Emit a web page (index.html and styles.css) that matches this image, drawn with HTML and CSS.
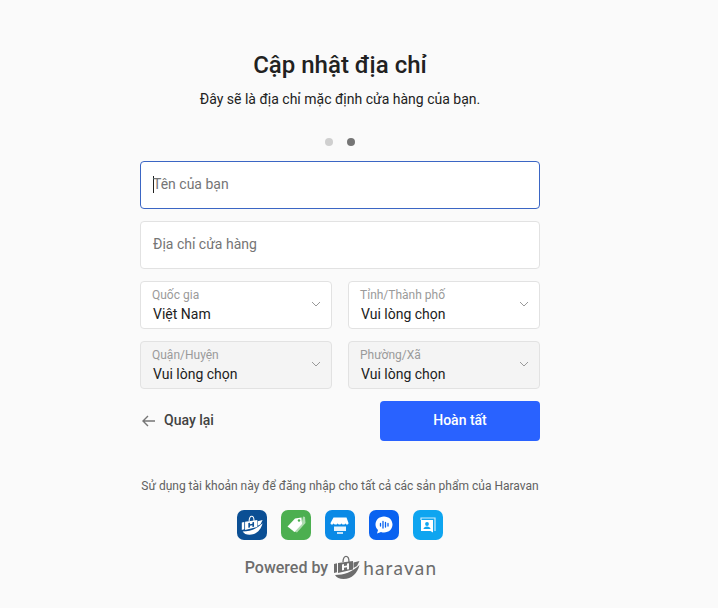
FILE: index.html
```html
<!DOCTYPE html>
<html lang="vi">
<head>
    <meta charset="UTF-8">
    <meta name="viewport" content="width=device-width, initial-scale=1.0">
    <title>Cập nhật địa chỉ</title>
    <link rel="stylesheet" href="styles.css">
</head>
<body>
    <svg class="icon-defs">
        <symbol id="haravan-mark" viewBox="0 0 27 24">
            <path d="M10 7c0-7.500 6-7.500 6 0" fill="none" stroke="currentColor" stroke-width="1.300"/>
            <path d="M1 9l3-.7v9L1 18zM20.500 7.500l6-1.500-2.500 5-3.500 2z" fill="currentColor"/>
            <path fill-rule="evenodd" d="M5 8l15-2v8.500L5 18zM9 9.500v6l2-.4v-2.300l3-.5v2.300l2-.4v-6l-2 .4v2l-3 .5v-2z" fill="currentColor"/>
            <path d="M2 20c9 0 17-3 24.500-10-2 8-7.500 14-16 14-4 0-7-1.500-8.500-4z" fill="currentColor"/>
        </symbol>
    </svg>

    <div class="container">
        <h1>Cập nhật địa chỉ</h1>
        <p class="subtitle">Đây sẽ là địa chỉ mặc định cửa hàng của bạn.</p>

        <div class="steps">
            <span class="dot"></span>
            <span class="dot active"></span>
        </div>

        <form class="address-form">
            <div class="text-field focused">
                <span class="caret"></span>
                <span class="placeholder">Tên của bạn</span>
            </div>
            <div class="text-field">
                <span class="placeholder">Địa chỉ cửa hàng</span>
            </div>

            <div class="select-grid">
                <div class="select-field">
                    <div class="select-label">Quốc gia</div>
                    <div class="select-value">Việt Nam</div>
                    <svg class="chevron" viewBox="0 0 10 6"><path d="M1 1l4 4 4-4"/></svg>
                </div>
                <div class="select-field">
                    <div class="select-label">Tỉnh/Thành phố</div>
                    <div class="select-value">Vui lòng chọn</div>
                    <svg class="chevron" viewBox="0 0 10 6"><path d="M1 1l4 4 4-4"/></svg>
                </div>
                <div class="select-field disabled">
                    <div class="select-label">Quận/Huyện</div>
                    <div class="select-value">Vui lòng chọn</div>
                    <svg class="chevron" viewBox="0 0 10 6"><path d="M1 1l4 4 4-4"/></svg>
                </div>
                <div class="select-field disabled">
                    <div class="select-label">Phường/Xã</div>
                    <div class="select-value">Vui lòng chọn</div>
                    <svg class="chevron" viewBox="0 0 10 6"><path d="M1 1l4 4 4-4"/></svg>
                </div>
            </div>

            <div class="form-actions">
                <a class="back-link">
                    <svg class="back-icon" viewBox="0 0 14 12"><path d="M13 6H1.500M6 1L1 6l5 5"/></svg>
                    Quay lại
                </a>
                <button type="button" class="submit-btn">Hoàn tất</button>
            </div>
        </form>

        <p class="products-note">Sử dụng tài khoản này để đăng nhập cho tất cả các sản phẩm của Haravan</p>

        <div class="products">
            <div class="product-icon navy">
                <svg class="navy-mark"><use href="#haravan-mark"/></svg>
            </div>
            <div class="product-icon green">
                <svg viewBox="0 0 30 30">
                    <path d="M12 21l9-9.500 1-5 2 .5 .5 6-8.500 9.500z" fill="#fff" fill-opacity=".55"/>
                    <path d="M6.500 16.500L14 8.500l6.500-1 .5 6.500-7.500 8z" fill="#fff"/>
                    <circle cx="18" cy="10.500" r="1.200" fill="#4caf50"/>
                </svg>
            </div>
            <div class="product-icon sky">
                <svg viewBox="0 0 30 30">
                    <path d="M8.500 7.500h13l2 5.500c0 2-3 2-3 0 0 2-4 2-4.200 0 0 2-3.400 2-3.600 0 0 2-4 2-4.200 0 0 2-3 2-3 0z" fill="#fff"/>
                    <path d="M9 16.500h12v4.500H9z" fill="#fff" fill-opacity=".9"/>
                    <path d="M12 23h6" stroke="#fff" stroke-width="1.500"/>
                </svg>
            </div>
            <div class="product-icon blue">
                <svg viewBox="0 0 30 30">
                    <path d="M15 6.500c5 0 8.500 3.600 8.500 8s-3.500 8-8.500 8c-1 0-2-.1-3-.5l-4 1.500 1-3.500c-1.600-1.500-2.500-3.400-2.500-5.500 0-4.400 3.500-8 8.500-8z" fill="#fff"/>
                    <path d="M11.500 13.500v2.500M14 11.500v6.500M16.500 12.500v4.500M19 13.500v2.500" stroke="#0a62f0" stroke-width="1.300" stroke-linecap="round"/>
                </svg>
            </div>
            <div class="product-icon cyan">
                <svg viewBox="0 0 30 30">
                    <path d="M8 10V8h14v13" fill="none" stroke="#fff" stroke-opacity=".8" stroke-width="1.200"/>
                    <path d="M8 10h12v12.500l-2.500-1.500H8z" fill="#fff"/>
                    <circle cx="14" cy="14" r="1.900" fill="#0ea5f0"/>
                    <path d="M10.500 19c0-3.500 7-3.500 7 0z" fill="#0ea5f0"/>
                </svg>
            </div>
        </div>

        <div class="powered">
            <span class="powered-text">Powered by</span>
            <svg class="powered-logo"><use href="#haravan-mark"/></svg>
            <span class="powered-brand">haravan</span>
        </div>
    </div>
</body>
</html>
```

FILE: styles.css
```css
* {
    margin: 0;
    padding: 0;
    box-sizing: border-box;
    font-family: 'Roboto', sans-serif;
}

body {
    background-color: #fafafa;
    color: #212121;
    min-height: 100vh;
    overflow: hidden;
}

.icon-defs {
    display: none;
}

.container {
    width: 400px;
    margin-left: 140px;
    padding-top: 49px;
}

h1 {
    font-size: 24px;
    font-weight: 500;
    line-height: 32px;
    text-align: center;
    color: #212121;
}

.subtitle {
    font-size: 14px;
    line-height: 20px;
    margin-top: 8px;
    text-align: center;
    color: #212121;
}

.steps {
    display: flex;
    justify-content: center;
    gap: 14px;
    margin-top: 29px;
    height: 8px;
}

.dot {
    width: 8px;
    height: 8px;
    border-radius: 50%;
    background-color: #cfcfcf;
}

.dot.active {
    background-color: #757575;
}

.address-form {
    display: flex;
    flex-direction: column;
    gap: 12px;
    margin-top: 15px;
}

.text-field {
    display: flex;
    align-items: center;
    height: 48px;
    padding: 0 12px 2px 12px;
    background-color: #fff;
    border: 1px solid #e2e2e2;
    border-radius: 4px;
    font-size: 14px;
}

.text-field.focused {
    border-color: #3b66c4;
}

.caret {
    width: 1px;
    height: 17px;
    margin-right: -1px;
    background-color: #212121;
}

.placeholder {
    color: #757575;
}

.select-grid {
    display: grid;
    grid-template-columns: 192px 192px;
    justify-content: space-between;
    gap: 12px 16px;
}

.select-field {
    position: relative;
    height: 48px;
    padding: 6px 11px;
    background-color: #fff;
    border: 1px solid #e2e2e2;
    border-radius: 4px;
}

.select-field.disabled {
    background-color: #f4f4f4;
}

.select-label {
    font-size: 12px;
    line-height: 14px;
    color: #9a9a9a;
}

.select-value {
    font-size: 14px;
    line-height: 20px;
    margin-top: 2px;
    margin-left: 1px;
    color: #212121;
}

.chevron {
    position: absolute;
    top: 19px;
    right: 10px;
    width: 10px;
    height: 6px;
    fill: none;
    stroke: #999;
    stroke-width: 1;
}

.form-actions {
    display: flex;
    justify-content: space-between;
    align-items: center;
}

.back-link {
    display: flex;
    align-items: center;
    gap: 8px;
    padding-left: 2px;
    padding-bottom: 2px;
    font-size: 14px;
    font-weight: 500;
    color: #424242;
}

.back-icon {
    width: 14px;
    height: 12px;
    margin-top: 2px;
    fill: none;
    stroke: #757575;
    stroke-width: 1.400;
}

.submit-btn {
    width: 160px;
    height: 40px;
    padding-bottom: 2px;
    background-color: #2962ff;
    color: #fff;
    border: none;
    border-radius: 4px;
    font-size: 14px;
    font-weight: 500;
}

.products-note {
    margin-top: 36px;
    font-size: 12px;
    line-height: 18px;
    text-align: center;
    color: #616161;
}

.products {
    display: flex;
    justify-content: center;
    gap: 14px;
    margin-top: 15px;
}

.product-icon {
    width: 30px;
    height: 30px;
    border-radius: 7px;
}

.product-icon svg {
    display: block;
    width: 30px;
    height: 30px;
}

.product-icon .navy-mark {
    width: 22px;
    height: 20px;
    margin: 0 auto;
    transform: translateY(5px);
    color: #fff;
}

.navy { background-color: #0b4f94; }
.green { background-color: #4caf50; }
.sky { background-color: #0a8ae6; }
.blue { background-color: #0a62f0; }
.cyan { background-color: #0ea5f0; }

.powered {
    display: flex;
    justify-content: center;
    align-items: center;
    height: 28px;
    margin-top: 13px;
    padding-left: 2px;
    color: #6d6d6d;
}

.powered-text {
    font-size: 16px;
    font-weight: 500;
}

.powered-logo {
    width: 27px;
    height: 24px;
    margin-left: 5px;
    color: #6d6d6d;
}

.powered-brand {
    font-family: 'Lato', sans-serif;
    font-size: 19px;
    letter-spacing: 1.200px;
    margin-left: 3px;
}
```
